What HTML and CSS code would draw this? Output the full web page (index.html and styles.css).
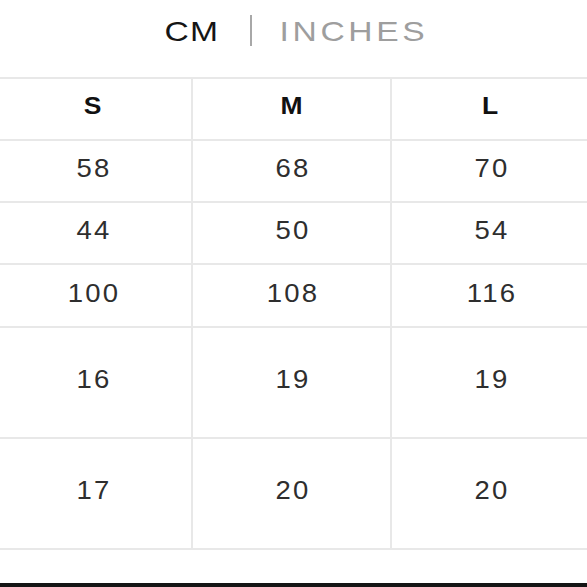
FILE: index.html
```html
<!DOCTYPE html>
<html lang="en">
<head>
<meta charset="utf-8">
<title>Size chart</title>
<link rel="stylesheet" href="styles.css">
</head>
<body>
<div class="page">
  <div class="units">
    <span class="unit unit-active">CM</span>
    <span class="unit-divider"></span>
    <span class="unit unit-muted">INCHES</span>
  </div>
  <div class="chart">
    <div class="cell head"><span class="txt">S</span></div>
    <div class="cell head"><span class="txt">M</span></div>
    <div class="cell head"><span class="txt">L</span></div>
    <div class="cell"><span class="txt">58</span></div>
    <div class="cell"><span class="txt">68</span></div>
    <div class="cell"><span class="txt">70</span></div>
    <div class="cell"><span class="txt">44</span></div>
    <div class="cell"><span class="txt">50</span></div>
    <div class="cell"><span class="txt">54</span></div>
    <div class="cell"><span class="txt">100</span></div>
    <div class="cell"><span class="txt">108</span></div>
    <div class="cell"><span class="txt">116</span></div>
    <div class="cell tall"><span class="txt">16</span></div>
    <div class="cell tall"><span class="txt">19</span></div>
    <div class="cell tall"><span class="txt">19</span></div>
    <div class="cell tall"><span class="txt">17</span></div>
    <div class="cell tall"><span class="txt">20</span></div>
    <div class="cell tall"><span class="txt">20</span></div>
  </div>
  <div class="spacer"></div>
  <div class="bottom-bar"></div>
</div>
</body>
</html>
```
FILE: styles.css
```css
html, body {
  margin: 0;
  padding: 0;
  background: #ffffff;
}
body {
  width: 587px;
  height: 587px;
  overflow: hidden;
  font-family: "Liberation Sans", Arial, sans-serif;
}
.page {
  display: flex;
  flex-direction: column;
  height: 587px;
}
.units {
  height: 77px;
  box-sizing: border-box;
  padding-top: 16px;
  padding-right: 2px;
  display: flex;
  justify-content: center;
  align-items: flex-start;
}
.unit {
  display: inline-block;
  font-size: 28px;
  line-height: 32px;
  transform: scaleX(1.2);
}
.unit-active {
  color: #151515;
  letter-spacing: 1px;
}
.unit-muted {
  color: #9e9e9e;
  letter-spacing: 3px;
}
.unit-divider {
  width: 2px;
  height: 31px;
  margin: -1px 40px 0 35px;
  background: #a8a8a8;
}
.chart {
  display: grid;
  grid-template-columns: repeat(3, 197px);
  grid-template-rows: 60px 60px 60px 61px 109px 109px;
  gap: 2px;
  padding: 2px;
  margin-left: -8px;
  width: max-content;
  background: #e8e8e8;
}
.cell {
  background: #ffffff;
  display: flex;
  align-items: center;
  justify-content: center;
  box-sizing: border-box;
  padding-bottom: 5px;
  font-size: 25px;
  color: #2e2e2e;
}
.txt {
  display: inline-block;
  padding-left: 2px;
  letter-spacing: 2px;
  transform: scaleX(1.1);
}
.head {
  font-weight: bold;
  font-size: 23px;
  color: #111111;
}
.head .txt {
  padding-left: 0;
  letter-spacing: 0;
  transform: scaleX(1.15);
}
.tall {
  padding-bottom: 6px;
}
.spacer {
  flex: 1;
}
.bottom-bar {
  height: 4px;
  background: #151515;
}
```
